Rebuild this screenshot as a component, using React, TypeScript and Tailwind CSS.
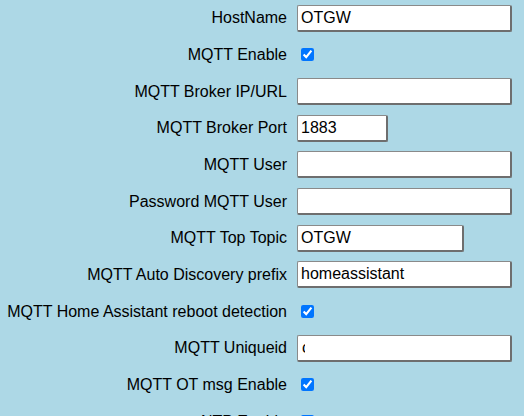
import React from "react";

type Row =
  | { label: string; kind: "text"; value: string; w: string }
  | { label: string; kind: "check" }
  | { label: string; kind: "clip" };

const rows: Row[] = [
  { label: "HostName", kind: "text", value: "OTGW", w: "w-[215px]" },
  { label: "MQTT Enable", kind: "check" },
  { label: "MQTT Broker IP/URL", kind: "text", value: "", w: "w-[215px]" },
  { label: "MQTT Broker Port", kind: "text", value: "1883", w: "w-[91px]" },
  { label: "MQTT User", kind: "text", value: "", w: "w-[215px]" },
  { label: "Password MQTT User", kind: "text", value: "", w: "w-[215px]" },
  { label: "MQTT Top Topic", kind: "text", value: "OTGW", w: "w-[167px]" },
  { label: "MQTT Auto Discovery prefix", kind: "text", value: "homeassistant", w: "w-[215px]" },
  { label: "MQTT Home Assistant reboot detection", kind: "check" },
  { label: "MQTT Uniqueid", kind: "clip" },
  { label: "MQTT OT msg Enable", kind: "check" },
  { label: "NTP Enable", kind: "check" },
];

const inputCls =
  "h-[27px] bg-white text-black text-[16px] pl-[3px] border-t border-l border-r-2 border-b-2 border-t-[#8a8a8a] border-l-[#8a8a8a] border-r-[#6e6e6e] border-b-[#6e6e6e] rounded-[2px] outline-none";

export default function App() {
  return (
    <div
      className="w-[524px] h-[416px] overflow-hidden bg-[#add8e6] text-black"
      style={{ fontFamily: '"Liberation Sans", Arial, sans-serif' }}
    >
      <div className="flex flex-col">
        {rows.map((r, i) => (
          <div key={i} className="flex items-center h-[36.667px] shrink-0">
            <div className="w-[287px] text-right text-[16px] leading-[18px] whitespace-nowrap">
              {r.label}
            </div>
            <div className="ml-[10px] flex items-center">
              {r.kind === "text" && (
                <input
                  type="text"
                  defaultValue={r.value}
                  className={`${inputCls} ${r.w}`}
                  style={{ fontFamily: '"Liberation Sans", Arial, sans-serif' }}
                />
              )}
              {r.kind === "check" && (
                <input
                  type="checkbox"
                  defaultChecked
                  className="w-[13px] h-[13px] ml-[4px] accent-[#0075ff]"
                />
              )}
              {r.kind === "clip" && (
                <div className={`${inputCls} w-[215px] flex items-center`}>
                  <span className="inline-block w-[2.5px] overflow-hidden leading-[18px] ml-[1px]">
                    c
                  </span>
                </div>
              )}
            </div>
          </div>
        ))}
      </div>
    </div>
  );
}
